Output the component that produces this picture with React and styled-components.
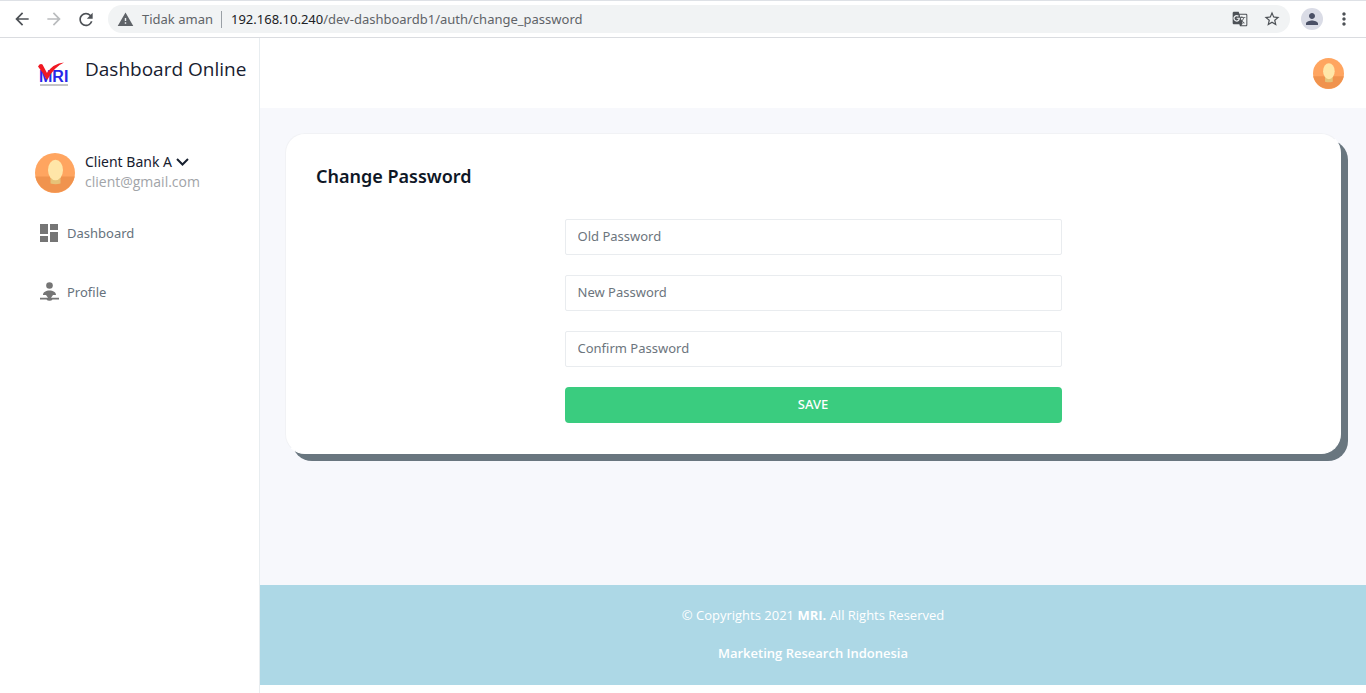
import React from "react";
import styled, { createGlobalStyle } from "styled-components";
import {
  MdArrowBack,
  MdArrowForward,
  MdRefresh,
  MdWarning,
  MdGTranslate,
  MdStarBorder,
  MdPerson,
  MdMoreVert,
  MdDashboard,
} from "react-icons/md";

const uiFont = `"Open Sans", "Noto Sans", sans-serif`;

const GlobalStyle = createGlobalStyle`
  *, *::before, *::after { box-sizing: border-box; }
  body {
    margin: 0;
    background: #fff;
    color: #6c757d;
    font-family: "Noto Sans", sans-serif;
    font-size: 13px;
    line-height: 20px;
  }
  button, input { font: inherit; }
`;

const Page = styled.div`
  display: flex;
  flex-direction: column;
  min-height: 100vh;
`;

const BrowserBar = styled.div`
  display: flex;
  align-items: center;
  height: 38px;
  padding: 0 12px;
  border-top: 1px solid #dee1e6;
  border-bottom: 1px solid #dadce0;
  color: #5f6368;
`;

const ToolButton = styled.button`
  display: flex;
  align-items: center;
  justify-content: center;
  width: 20px;
  height: 20px;
  margin-right: ${(p) => p.$gap || 0}px;
  padding: 0;
  border: 0;
  background: none;
  color: ${(p) => (p.disabled ? "#babcbe" : "#4d5156")};
  flex: none;
`;

const AddressBar = styled.div`
  display: flex;
  align-items: center;
  flex: 1;
  min-width: 0;
  height: 28px;
  padding: 0 8px 0 9px;
  border-radius: 14px;
  background: #f1f3f4;
`;

const Security = styled.span`
  display: flex;
  align-items: center;
  gap: 8px;
  margin-right: 9px;
  padding-right: 8px;
  border-right: 1px solid #9aa0a6;
  line-height: 16px;
  white-space: nowrap;
`;

const Url = styled.span`
  flex: 1;
  min-width: 0;
  overflow: hidden;
  white-space: nowrap;
`;

const Host = styled.span`
  color: #202124;
`;

const ProfileButton = styled(ToolButton)`
  width: 22px;
  height: 22px;
  margin: 0 11px;
  border-radius: 50%;
  background: #dadce6;
  color: #4a5066;
`;

const Shell = styled.div`
  display: flex;
  flex: 1;
`;

const Sidebar = styled.aside`
  width: 260px;
  flex: none;
  border-right: 1px solid #e8edf0;
`;

const Brand = styled.a`
  display: flex;
  align-items: center;
  gap: 14px;
  height: 70px;
  padding-left: 37px;
  color: #17202f;
  text-decoration: none;
  white-space: nowrap;
`;

const BrandName = styled.span`
  padding-bottom: 8px;
  font-family: ${uiFont};
  font-size: 19px;
  line-height: 28px;
`;

const Account = styled.div`
  display: flex;
  align-items: center;
  gap: 10px;
  margin: 44px 0 0 35px;
`;

const AccountText = styled.div`
  padding-bottom: 2px;
`;

const AccountButton = styled.button`
  display: flex;
  align-items: center;
  gap: 4px;
  padding: 0;
  border: 0;
  background: none;
  color: #17202f;
  font-size: 14px;
  line-height: 20px;
`;

const Email = styled.div`
  color: #a1a4a8;
  font-family: ${uiFont};
  font-size: 14px;
  line-height: 20px;
`;

const Menu = styled.nav`
  display: flex;
  flex-direction: column;
  gap: 35px;
  padding: 27px 0 0 37px;
`;

const MenuLink = styled.a`
  display: flex;
  align-items: center;
  gap: 6px;
  color: #66727c;
  text-decoration: none;
`;

const Content = styled.div`
  display: flex;
  flex-direction: column;
  flex: 1;
  min-width: 0;
  padding-bottom: 8px;
`;

const TopBar = styled.header`
  display: flex;
  align-items: center;
  justify-content: flex-end;
  height: 70px;
  padding-right: 22px;
`;

const AvatarButton = styled.button`
  display: flex;
  padding: 0;
  border: 0;
  background: none;
`;

const Main = styled.main`
  flex: 1;
  padding: 25px;
  background: #f7f8fc;
`;

const Card = styled.section`
  padding: 30px;
  border: 1px solid #f1f2f5;
  border-right-color: #fff;
  border-bottom-color: #fff;
  border-radius: 20px;
  background: #fff;
  box-shadow: 7px 7px 0 #69767f;
`;

const Title = styled.h1`
  margin: 0 0 31px;
  color: #0e1726;
  font-size: 18px;
  font-weight: 600;
  line-height: 24px;
`;

const Form = styled.form`
  display: flex;
  flex-direction: column;
  gap: 20px;
  width: 50%;
  margin: 0 auto;
`;

const Field = styled.input`
  width: 100%;
  height: 36px;
  padding: 0 12px 2px;
  border: 1px solid #e9ecef;
  border-radius: 2px;
  background: #fff;
  color: #495057;
  outline: 0;
  &::placeholder {
    color: #6c757d;
    opacity: 1;
  }
`;

const SaveButton = styled.button`
  height: 36px;
  padding: 0 12px 2px;
  border: 0;
  border-radius: 4px;
  background: #3acc7f;
  color: #fff;
  font-weight: 500;
`;

const Footer = styled.footer`
  display: flex;
  flex-direction: column;
  align-items: center;
  gap: 18px;
  height: 100px;
  padding-top: 20px;
  background: #add8e6;
  color: #fff;
  font-family: ${uiFont};
`;

const FooterText = styled.div`
  font-weight: ${(p) => (p.$strong ? 600 : 500)};
`;

const Avatar = ({ size }) => (
  <svg width={size} height={size} viewBox="0 0 40 40" aria-hidden="true">
    <circle cx="20" cy="20" r="20" fill="#ffa560" />
    <path d="M.4 23.500h39.200A20 20 0 0 1 .4 23.500z" fill="#f0934e" />
    <path d="M15.500 22h10v8.500q-5 1.500-10 0z" fill="#e6c278" />
    <ellipse cx="20.500" cy="17" rx="7.500" ry="10.300" fill="#ffe6a8" />
  </svg>
);

const Logo = () => (
  <svg width="34" height="28" viewBox="0 0 34 28" aria-label="MRI">
    <text x="2" y="23" fill="#2727e8" fontFamily="Liberation Sans, sans-serif" fontSize="16" fontWeight="700">MRI</text>
    <path d="M1 7.500Q3 4 5.500 5.500L10 14Q16 4.500 27 3.500 17 8 10.500 20.500H9.500Q5.500 13 1 7.500z" fill="#f01822" />
    <path d="M3 26h28" stroke="#8a8a8a" strokeWidth="1" />
  </svg>
);

const ProfileIcon = () => (
  <svg width="24" height="24" viewBox="-2 -2 24 24" fill="#757575" aria-hidden="true">
    <circle cx="10.500" cy="3.500" r="3.300" />
    <path d="M4 13C4 10 7 8.500 10.500 8.500S17 10 17 13h-3L12 15.800h8v1.700h-6.500a3.200 2 0 0 1-6 0H1v-1.700h8L7 13z" />
  </svg>
);

const Chevron = () => (
  <svg width="13" height="12" viewBox="0 0 13 12" fill="none" stroke="#17202f" strokeWidth="2" aria-hidden="true">
    <path d="M1 3l5.500 5.500L12 3" />
  </svg>
);

const fields = ["Old Password", "New Password", "Confirm Password"];

export default function App() {
  return (
    <Page>
      <GlobalStyle />
      <BrowserBar>
        <ToolButton $gap={12} aria-label="Back"><MdArrowBack size={20} /></ToolButton>
        <ToolButton $gap={12} disabled aria-label="Forward"><MdArrowForward size={20} /></ToolButton>
        <ToolButton $gap={12} aria-label="Reload"><MdRefresh size={21} /></ToolButton>
        <AddressBar>
          <Security><MdWarning size={17} />Tidak aman</Security>
          <Url><Host>192.168.10.240</Host>/dev-dashboardb1/auth/change_password</Url>
          <ToolButton $gap={12} aria-label="Translate"><MdGTranslate size={16} /></ToolButton>
          <ToolButton aria-label="Bookmark"><MdStarBorder size={18} /></ToolButton>
        </AddressBar>
        <ProfileButton aria-label="Browser profile"><MdPerson size={18} /></ProfileButton>
        <ToolButton aria-label="Menu"><MdMoreVert size={20} /></ToolButton>
      </BrowserBar>
      <Shell>
        <Sidebar>
          <Brand href="#">
            <Logo />
            <BrandName>Dashboard Online</BrandName>
          </Brand>
          <Account>
            <Avatar size={40} />
            <AccountText>
              <AccountButton>Client Bank A<Chevron /></AccountButton>
              <Email>client@gmail.com</Email>
            </AccountText>
          </Account>
          <Menu>
            <MenuLink href="#"><MdDashboard size={24} color="#757575" />Dashboard</MenuLink>
            <MenuLink href="#"><ProfileIcon />Profile</MenuLink>
          </Menu>
        </Sidebar>
        <Content>
          <TopBar>
            <AvatarButton aria-label="Account"><Avatar size={31} /></AvatarButton>
          </TopBar>
          <Main>
            <Card>
              <Title>Change Password</Title>
              <Form>
                {fields.map((name) => (
                  <Field key={name} type="password" placeholder={name} aria-label={name} />
                ))}
                <SaveButton type="button">SAVE</SaveButton>
              </Form>
            </Card>
          </Main>
          <Footer>
            <FooterText>© Copyrights 2021 <strong>MRI.</strong> All Rights Reserved</FooterText>
            <FooterText $strong>Marketing Research Indonesia</FooterText>
          </Footer>
        </Content>
      </Shell>
    </Page>
  );
}
